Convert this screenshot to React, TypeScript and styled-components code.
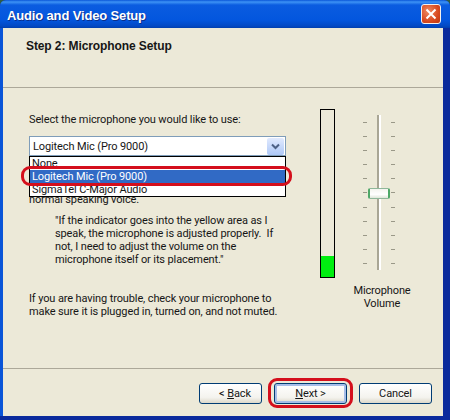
import styled, { createGlobalStyle } from "styled-components";

const Global = createGlobalStyle`
  html, body { margin: 0; padding: 0; background: #2f5d45; }
  body { font-family: Roboto, "Liberation Sans", Arial, sans-serif; font-size: 11px; letter-spacing: -0.12px; color: #161616; }
`;

const Win = styled.div`
  width: 450px;
  height: 420px;
  display: flex;
  flex-direction: column;
  overflow: hidden;
  position: relative;
  background: #0a2a9c;
  border-radius: 6px 6px 0 0;
`;

const TitleBar = styled.div`
  height: 28px;
  flex: none;
  display: flex;
  align-items: center;
  justify-content: space-between;
  padding: 2px 9px 0 7px;
  box-sizing: border-box;
  background: linear-gradient(#0a56d8 0, #3d93f5 2px, #0a5ce0 5px, #0356de 20px, #0349c4 26px, #013fae 28px);
`;

const Title = styled.div`
  color: #fff;
  font-family: "Liberation Sans", Arial, sans-serif;
  font-weight: bold;
  font-size: 13px;
  letter-spacing: -0.15px;
  text-shadow: 1px 1px 0 #0b2f8c;
`;

const CloseBox = styled.div`
  width: 20px;
  height: 20px;
  margin-top: -2px;
  box-sizing: border-box;
  border: 1px solid #f4f0ec;
  border-radius: 3px;
  background: radial-gradient(circle at 35% 35%, #ef8a62, #d8491f 60%, #bd3510);
  display: flex;
  align-items: center;
  justify-content: center;
`;

const Client = styled.div`
  flex: 1;
  display: flex;
  flex-direction: column;
  margin: 0 7px 4px 0;
  border-left: 3px solid #0a55d8;
  background: #ece9d8;
  min-height: 0;
`;

const Header = styled.div`
  height: 60px;
  flex: none;
  box-sizing: border-box;
  padding: 11px 0 0 23px;
  border-bottom: 1px solid #aca899;
  font-family: "Liberation Sans", Arial, sans-serif;
  font-weight: bold;
  font-size: 12px;
  letter-spacing: -0.1px;
`;

const Body = styled.div`
  flex: 1;
  display: flex;
  min-height: 0;
  position: relative;
`;

const LeftPane = styled.div`
  width: 290px;
  flex: none;
  padding: 25px 0 0 26px;
  box-sizing: border-box;
  position: relative;
`;

const Line = styled.p`
  margin: 0;
  line-height: 13px;
  white-space: nowrap;
`;

const Combo = styled.div`
  width: 257px;
  height: 20px;
  margin-top: 10px;
  box-sizing: border-box;
  border: 1px solid #7f9db9;
  background: #fff;
  display: flex;
  align-items: center;
  justify-content: space-between;
  padding: 0 1px 0 3px;
`;

const ComboBtn = styled.div`
  width: 17px;
  height: 17px;
  border-radius: 2px;
  background: linear-gradient(#e1eafe, #aec8f7);
  display: flex;
  align-items: center;
  justify-content: center;
`;

const Hidden = styled.div`
  margin-top: 24px;
`;

const Quote = styled.div`
  margin: 8px 0 0 26px;
`;

const Trouble = styled.div`
  margin-top: 26px;
`;

const DropList = styled.div`
  position: absolute;
  left: 26px;
  top: 68px;
  width: 257px;
  height: 41px;
  box-sizing: border-box;
  border: 1px solid #000;
  background: #fff;
  z-index: 2;
`;

const DropItem = styled.div<{ $on?: boolean }>`
  height: 13px;
  line-height: 13px;
  padding-left: 2px;
  background: ${(p) => (p.$on ? "#316ac5" : "#fff")};
  color: ${(p) => (p.$on ? "#fff" : "#161616")};
  white-space: nowrap;
`;

const RedOval = styled.div`
  position: absolute;
  left: 18px;
  top: 78px;
  width: 271px;
  height: 20px;
  box-sizing: border-box;
  border: 3px solid #d40f1c;
  border-radius: 9px;
  z-index: 3;
`;

const RightPane = styled.div`
  flex: 1;
  display: flex;
  padding: 21px 0 0 27px;
  box-sizing: border-box;
`;

const Meter = styled.div`
  width: 15px;
  height: 169px;
  flex: none;
  box-sizing: border-box;
  border: 1px solid #000;
  display: flex;
  flex-direction: column;
  justify-content: flex-end;
`;

const MeterFill = styled.div`
  height: 21px;
  background: #00ee10;
`;

const VolumeCol = styled.div`
  width: 92px;
  margin-left: 1px;
  display: flex;
  flex-direction: column;
  align-items: center;
`;

const SliderArea = styled.div`
  position: relative;
  width: 32px;
  height: 155px;
  margin: 6px 6px 0 0;
  display: flex;
  justify-content: center;
`;

const Track = styled.div`
  width: 2px;
  height: 100%;
  background: #a9a695;
  border-right: 2px solid #fff;
`;

const Ticks = styled.div`
  position: absolute;
  inset: 7px 0 6px 0;
  display: flex;
  flex-direction: column;
  justify-content: space-between;
`;

const TickRow = styled.div`
  display: flex;
  justify-content: space-between;
  height: 1px;
`;

const Tick = styled.span`
  width: 4px;
  height: 1px;
  background: #9a9888;
`;

const Thumb = styled.div`
  position: absolute;
  left: 5px;
  top: 73px;
  width: 22px;
  height: 11px;
  box-sizing: border-box;
  border-radius: 2px;
  border: 1px solid #8fb79a;
  border-left: 2px solid #4fa868;
  border-right: 2px solid #4fa868;
  background: linear-gradient(#f4f4ee, #fff 60%, #dfe6d8);
`;

const VolumeLabel = styled.div`
  margin-top: 14px;
  text-align: center;
  line-height: 13px;
`;

const Footer = styled.div`
  height: 48px;
  flex: none;
  box-sizing: border-box;
  border-top: 1px solid #aca899;
  display: flex;
  justify-content: flex-end;
  gap: 12px;
  padding: 14px 11px 0 0;
`;

const Btn = styled.div<{ $w: number; $def?: boolean; $pl?: number }>`
  width: ${(p) => p.$w}px;
  height: 21px;
  box-sizing: border-box;
  border: 1px solid #003c74;
  border-radius: 3px;
  padding-left: ${(p) => p.$pl ?? 0}px;
  background: linear-gradient(#fff, #f4f3ee 70%, #dcd8ca);
  box-shadow: ${(p) => (p.$def ? "inset 0 0 0 2px #a6bde8" : "none")};
  display: flex;
  align-items: center;
  justify-content: center;
  color: #161616;
`;

const Under = styled.span`
  text-decoration: underline;
`;

const RedBox = styled.div`
  position: absolute;
  right: 90px;
  top: 10px;
  width: 85px;
  height: 30px;
  box-sizing: border-box;
  border: 3px solid #d40f1c;
  border-radius: 9px;
`;

const FooterWrap = styled.div`
  position: relative;
`;

const ticks = Array.from({ length: 11 });

export default function App() {
  return (
    <Win>
      <Global />
      <TitleBar>
        <Title>Audio and Video Setup</Title>
        <CloseBox>
          <svg width="12" height="12" viewBox="0 0 12 12">
            <path d="M1.5 1.5 L10.5 10.5 M10.5 1.5 L1.5 10.5" stroke="#fff" strokeWidth="2" />
          </svg>
        </CloseBox>
      </TitleBar>
      <Client>
        <Header>Step 2: Microphone Setup</Header>
        <Body>
          <LeftPane>
            <Line>Select the microphone you would like to use:</Line>
            <Combo>
              <span>Logitech Mic (Pro 9000)</span>
              <ComboBtn>
                <svg width="9" height="7" viewBox="0 0 9 7">
                  <path d="M1 1.5 L4.5 5 L8 1.5" fill="none" stroke="#4d6185" strokeWidth="2" />
                </svg>
              </ComboBtn>
            </Combo>
            <Hidden>
              <Line>&nbsp;</Line>
              <Line>normal speaking voice.</Line>
            </Hidden>
            <Quote>
              <Line>"If the indicator goes into the yellow area as I</Line>
              <Line>speak, the microphone is adjusted properly.&nbsp; If</Line>
              <Line>not, I need to adjust the volume on the</Line>
              <Line>microphone itself or its placement."</Line>
            </Quote>
            <Trouble>
              <Line>If you are having trouble, check your microphone to</Line>
              <Line>make sure it is plugged in, turned on, and not muted.</Line>
            </Trouble>
            <DropList>
              <DropItem>None</DropItem>
              <DropItem $on>Logitech Mic (Pro 9000)</DropItem>
              <DropItem>SigmaTel C-Major Audio</DropItem>
            </DropList>
            <RedOval />
          </LeftPane>
          <RightPane>
            <Meter>
              <MeterFill />
            </Meter>
            <VolumeCol>
              <SliderArea>
                <Track />
                <Ticks>
                  {ticks.map((_, i) => (
                    <TickRow key={i}>
                      <Tick />
                      <Tick />
                    </TickRow>
                  ))}
                </Ticks>
                <Thumb />
              </SliderArea>
              <VolumeLabel>
                Microphone
                <br />
                Volume
              </VolumeLabel>
            </VolumeCol>
          </RightPane>
        </Body>
        <FooterWrap>
          <Footer>
            <Btn $w={63} $pl={9}>
              &lt;&nbsp;<Under>B</Under>ack
            </Btn>
            <Btn $w={73} $def>
              <Under>N</Under>ext&nbsp;&gt;
            </Btn>
            <Btn $w={73}>Cancel</Btn>
          </Footer>
          <RedBox />
        </FooterWrap>
      </Client>
    </Win>
  );
}
